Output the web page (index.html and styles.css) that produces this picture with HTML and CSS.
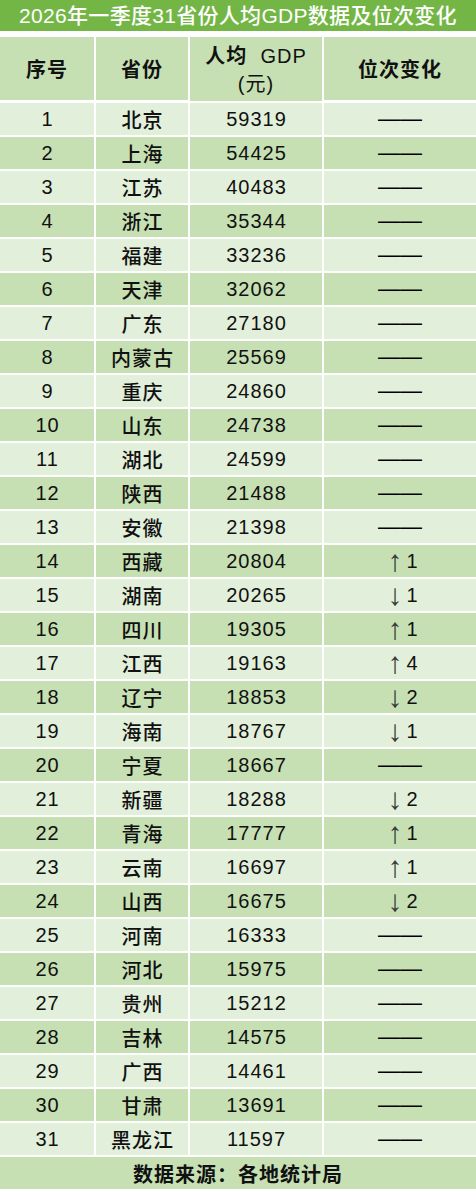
FILE: index.html
```
<!DOCTYPE html>
<html lang="zh-CN">
<head>
<meta charset="utf-8">
<title>2026年一季度31省份人均GDP数据及位次变化</title>
<link rel="stylesheet" href="styles.css">
</head>
<body>
<div class="title">2026年一季度31省份人均GDP数据及位次变化</div>
<div class="grid">
  <div class="hd">序号</div>
  <div class="hd">省份</div>
  <div class="hd two"><span>人均&nbsp;&nbsp;<span class="lat">GDP</span></span><span class="lat">(元)</span></div>
  <div class="hd">位次变化</div>

  <div class="c l">1</div><div class="c l zh">北京</div><div class="c l">59319</div><div class="c l dash">——</div>
  <div class="c d">2</div><div class="c d zh">上海</div><div class="c d">54425</div><div class="c d dash">——</div>
  <div class="c l">3</div><div class="c l zh">江苏</div><div class="c l">40483</div><div class="c l dash">——</div>
  <div class="c d">4</div><div class="c d zh">浙江</div><div class="c d">35344</div><div class="c d dash">——</div>
  <div class="c l">5</div><div class="c l zh">福建</div><div class="c l">33236</div><div class="c l dash">——</div>
  <div class="c d">6</div><div class="c d zh">天津</div><div class="c d">32062</div><div class="c d dash">——</div>
  <div class="c l">7</div><div class="c l zh">广东</div><div class="c l">27180</div><div class="c l dash">——</div>
  <div class="c d">8</div><div class="c d zh">内蒙古</div><div class="c d">25569</div><div class="c d dash">——</div>
  <div class="c l">9</div><div class="c l zh">重庆</div><div class="c l">24860</div><div class="c l dash">——</div>
  <div class="c d">10</div><div class="c d zh">山东</div><div class="c d">24738</div><div class="c d dash">——</div>
  <div class="c l">11</div><div class="c l zh">湖北</div><div class="c l">24599</div><div class="c l dash">——</div>
  <div class="c d">12</div><div class="c d zh">陕西</div><div class="c d">21488</div><div class="c d dash">——</div>
  <div class="c l">13</div><div class="c l zh">安徽</div><div class="c l">21398</div><div class="c l dash">——</div>
  <div class="c d">14</div><div class="c d zh">西藏</div><div class="c d">20804</div><div class="c d chg"><span class="ar">↑</span>1</div>
  <div class="c l">15</div><div class="c l zh">湖南</div><div class="c l">20265</div><div class="c l chg"><span class="ar">↓</span>1</div>
  <div class="c d">16</div><div class="c d zh">四川</div><div class="c d">19305</div><div class="c d chg"><span class="ar">↑</span>1</div>
  <div class="c l">17</div><div class="c l zh">江西</div><div class="c l">19163</div><div class="c l chg"><span class="ar">↑</span>4</div>
  <div class="c d">18</div><div class="c d zh">辽宁</div><div class="c d">18853</div><div class="c d chg"><span class="ar">↓</span>2</div>
  <div class="c l">19</div><div class="c l zh">海南</div><div class="c l">18767</div><div class="c l chg"><span class="ar">↓</span>1</div>
  <div class="c d">20</div><div class="c d zh">宁夏</div><div class="c d">18667</div><div class="c d dash">——</div>
  <div class="c l">21</div><div class="c l zh">新疆</div><div class="c l">18288</div><div class="c l chg"><span class="ar">↓</span>2</div>
  <div class="c d">22</div><div class="c d zh">青海</div><div class="c d">17777</div><div class="c d chg"><span class="ar">↑</span>1</div>
  <div class="c l">23</div><div class="c l zh">云南</div><div class="c l">16697</div><div class="c l chg"><span class="ar">↑</span>1</div>
  <div class="c d">24</div><div class="c d zh">山西</div><div class="c d">16675</div><div class="c d chg"><span class="ar">↓</span>2</div>
  <div class="c l">25</div><div class="c l zh">河南</div><div class="c l">16333</div><div class="c l dash">——</div>
  <div class="c d">26</div><div class="c d zh">河北</div><div class="c d">15975</div><div class="c d dash">——</div>
  <div class="c l">27</div><div class="c l zh">贵州</div><div class="c l">15212</div><div class="c l dash">——</div>
  <div class="c d">28</div><div class="c d zh">吉林</div><div class="c d">14575</div><div class="c d dash">——</div>
  <div class="c l">29</div><div class="c l zh">广西</div><div class="c l">14461</div><div class="c l dash">——</div>
  <div class="c d">30</div><div class="c d zh">甘肃</div><div class="c d">13691</div><div class="c d dash">——</div>
  <div class="c l">31</div><div class="c l zh">黑龙江</div><div class="c l">11597</div><div class="c l dash">——</div>

  <div class="foot">数据来源：各地统计局</div>
</div>
</body>
</html>
```
FILE: styles.css
```
html, body {
  margin: 0;
  padding: 0;
  background: #ffffff;
}
body {
  width: 476px;
  font-family: "Liberation Sans", "Noto Sans CJK SC", sans-serif;
  color: #111111;
}
.title {
  height: 31px;
  background: #74b645;
  color: #ffffff;
  font-size: 21px;
  font-weight: 500;
  line-height: 31px;
  text-align: center;
  letter-spacing: 0.3px;
  white-space: nowrap;
  overflow: hidden;
}
.grid {
  margin-top: 6px;
  display: grid;
  grid-template-columns: 94px 92px 132px 152px;
  column-gap: 2px;
  row-gap: 2px;
}
.hd {
  height: 63px;
  background: #c6e0b4;
  display: flex;
  align-items: center;
  justify-content: center;
  font-size: 20px;
  font-weight: 700;
  letter-spacing: 1px;
}
.hd.two {
  flex-direction: column;
  line-height: 28px;
  padding-top: 1px;
}
.lat {
  font-weight: 400;
  letter-spacing: 1px;
}
.c {
  height: 32px;
  display: flex;
  align-items: center;
  justify-content: center;
  font-size: 20px;
  letter-spacing: 1px;
  padding-left: 1px;
}
.c.l { background: #e2efda; }
.c.d { background: #c6e0b4; }
.zh {
  font-weight: 500;
}
.dash {
  font-family: "Liberation Sans", sans-serif;
  font-size: 22px;
  letter-spacing: 0;
  padding-left: 0;
  color: #000000;
}
.chg {
  padding-left: 6px;
}
.ar {
  font-family: "Liberation Sans", sans-serif;
  font-size: 30px;
  line-height: 24px;
  color: #3a3a3a;
  margin-right: 4px;
  letter-spacing: 0;
}
.foot {
  grid-column: 1 / -1;
  height: 32px;
  background: #c6e0b4;
  display: flex;
  align-items: center;
  justify-content: center;
  font-size: 20px;
  font-weight: 700;
  letter-spacing: 1px;
}
```
